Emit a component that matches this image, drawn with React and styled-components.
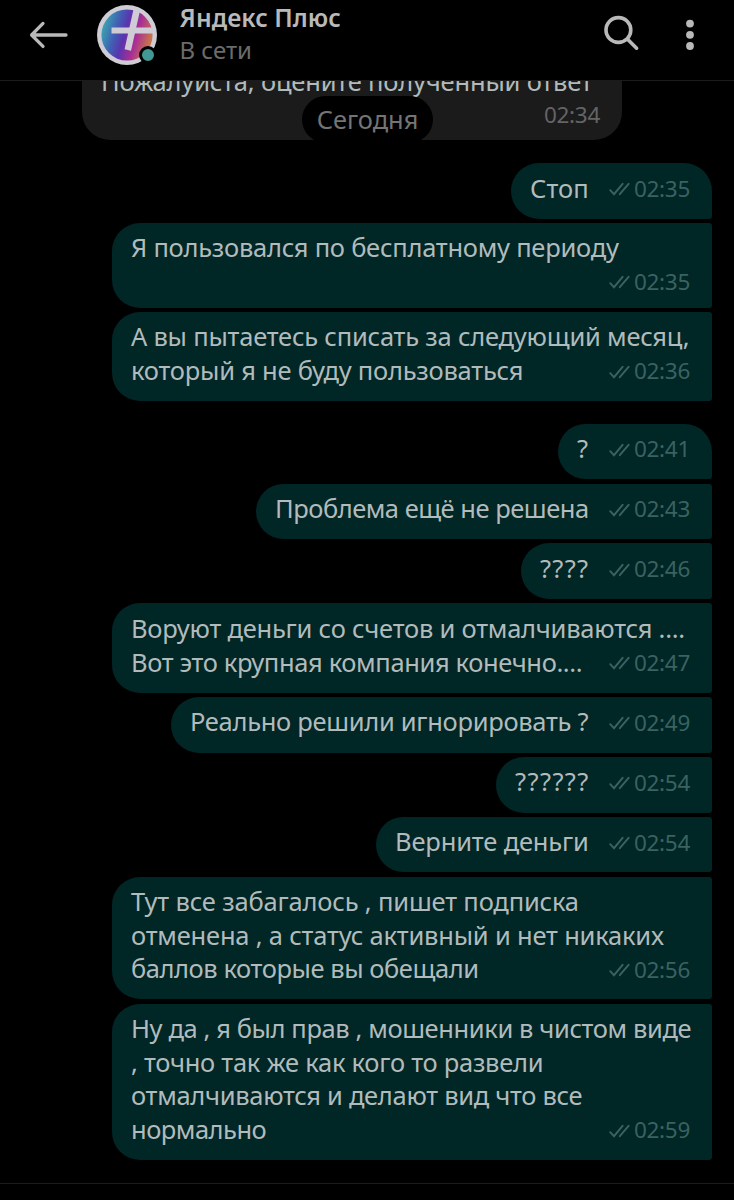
import React from "react";
import styled, { createGlobalStyle } from "styled-components";

// each line is [text, letter-spacing in px]
const messages = [
  { time: "02:35", width: 201, first: true, lines: [["Стоп", 0.1]] },
  {
    time: "02:35",
    width: 600,
    ownRow: true,
    lines: [["Я пользовался по бесплатному периоду", -0.25]],
  },
  {
    time: "02:36",
    width: 600,
    lines: [
      ["А вы пытаетесь списать за следующий месяц,", -0.22],
      ["который я не буду пользоваться", -0.23],
    ],
  },
  { time: "02:41", width: 154, first: true, lines: [["?", 0]] },
  { time: "02:43", width: 456, lines: [["Проблема ещё не решена", -0.48]] },
  { time: "02:46", width: 191, lines: [["????", 1.3]] },
  {
    time: "02:47",
    width: 600,
    lines: [
      ["Воруют деньги со счетов и отмалчиваются ....", -0.23],
      ["Вот это крупная компания конечно....", -0.37],
    ],
  },
  {
    time: "02:49",
    width: 541,
    lines: [["Реально решили игнорировать ?", -0.3]],
  },
  { time: "02:54", width: 216, lines: [["??????", 1.4]] },
  { time: "02:54", width: 336, lines: [["Верните деньги", -0.16]] },
  {
    time: "02:56",
    width: 600,
    lines: [
      ["Тут все забагалось , пишет подписка", -0.17],
      ["отменена , а статус активный и нет никаких", -0.2],
      ["баллов которые вы обещали", -0.43],
    ],
  },
  {
    time: "02:59",
    width: 600,
    lines: [
      ["Ну да , я был прав , мошенники в чистом виде", -0.39],
      [", точно так же как кого то развели", -0.26],
      ["отмалчиваются и делают вид что все", -0.3],
      ["нормально", -0.5],
    ],
  },
];

const Meta = ({ time }) => (
  <StMeta>
    <svg width="21" height="14" viewBox="0 0 21 14">
      <path
        d="M1.2 8.2L5 12.2L13.6 1.8M10.8 12.2L19.6 1.8"
        fill="none"
        stroke="currentColor"
        strokeWidth="1.9"
        strokeLinecap="round"
      />
    </svg>
    <StTime>{time}</StTime>
  </StMeta>
);

const Message = ({ time, width, first, ownRow, lines }) => (
  <StBubble $width={width} $first={first} $ownRow={ownRow}>
    {lines.map(([text, spacing], i) => (
      <StLine key={text}>
        <StText $spacing={spacing}>{text}</StText>
        {!ownRow && i === lines.length - 1 && <Meta time={time} />}
      </StLine>
    ))}
    {ownRow && (
      <StMetaRow>
        <Meta time={time} />
      </StMetaRow>
    )}
  </StBubble>
);

const Header = () => (
  <StHeader>
    <StBack>
      <svg width="40" height="28" viewBox="0 0 40 28">
        <path
          d="M14 2.4L2.6 14L14 25.4M2.6 14H37"
          fill="none"
          stroke="currentColor"
          strokeWidth="3.3"
          strokeLinecap="round"
          strokeLinejoin="round"
        />
      </svg>
    </StBack>
    <StAvatar>
      <svg width="62" height="62" viewBox="0 0 62 62">
        <defs>
          <linearGradient id="plus" x1="0" y1="0.35" x2="1" y2="0.65">
            <stop offset="0.02" stopColor="#3ba3b0" />
            <stop offset="0.26" stopColor="#3f62b4" />
            <stop offset="0.45" stopColor="#5a35ae" />
            <stop offset="0.68" stopColor="#a92e94" />
            <stop offset="0.95" stopColor="#c8754a" />
          </linearGradient>
        </defs>
        <circle cx="31" cy="31" r="30" fill="#cfccd6" />
        <circle cx="31" cy="31" r="25.6" fill="url(#plus)" />
        <g stroke="#cfccd6" fill="none">
          <path d="M15.5 26.6H58" strokeWidth="6" />
          <path d="M41.2 4L31.8 46" strokeWidth="6.6" />
        </g>
      </svg>
      <StOnline />
    </StAvatar>
    <StTitles>
      <StName>Яндекс Плюс</StName>
      <StStatus>В сети</StStatus>
    </StTitles>
    <StActions>
      <svg width="38" height="38" viewBox="0 0 38 38">
        <g
          fill="none"
          stroke="currentColor"
          strokeWidth="3.6"
          strokeLinecap="round"
        >
          <circle cx="14.4" cy="15" r="12.4" />
          <path d="M23.6 24.2L32.6 33.2" />
        </g>
      </svg>
      <svg width="8" height="32" viewBox="0 0 8 32" fill="currentColor">
        <circle cx="4" cy="4.6" r="3.9" />
        <circle cx="4" cy="15.8" r="3.9" />
        <circle cx="4" cy="27" r="3.9" />
      </svg>
    </StActions>
  </StHeader>
);

export default function App() {
  return (
    <StPage>
      <GlobalStyle />
      <Header />
      <StChat>
        <StDate>Сегодня</StDate>
        <StIncoming>
          <StText $spacing={-0.19}>Пожалуйста, оцените полученный ответ</StText>
          <StIncomingTime>02:34</StIncomingTime>
        </StIncoming>
        {messages.map((message, i) => (
          <Message key={i} {...message} />
        ))}
      </StChat>
      <StFooter />
    </StPage>
  );
}

const GlobalStyle = createGlobalStyle`
  body {
    margin: 0;
    background-color: #000;
  }
`;

const StPage = styled.div`
  display: flex;
  flex-direction: column;
  width: 734px;
  height: 1200px;
  overflow: hidden;
  background-color: #000;
  font-family: "Noto Sans", sans-serif;
`;

const StHeader = styled.header`
  display: flex;
  flex: none;
  align-items: flex-start;
  box-sizing: border-box;
  height: 81px;
  border-bottom: 1px solid #1b1b1b;
  color: #b9b9b9;

  svg {
    display: block;
  }
`;

const StBack = styled.div`
  padding: 21px 27px 0 29px;
`;

const StAvatar = styled.div`
  position: relative;
  width: 62px;
  height: 62px;
  margin-top: 4px;
`;

/* the dot sits over the avatar edge */
const StOnline = styled.span`
  position: absolute;
  right: 1px;
  bottom: 2px;
  width: 12px;
  height: 12px;
  border: 3px solid #000;
  border-radius: 50%;
  background-color: #429894;
`;

const StTitles = styled.div`
  display: flex;
  flex: 1;
  flex-direction: column;
  padding: 2px 0 0 21.5px;
  white-space: nowrap;
`;

const StName = styled.span`
  font-size: 24.6px;
  font-weight: 600;
  letter-spacing: 0.05px;
  line-height: 32px;
`;

const StStatus = styled.span`
  color: #6b6b6b;
  font-size: 24px;
  line-height: 31px;
`;

const StActions = styled.div`
  display: flex;
  align-items: flex-start;
  gap: 44px;
  padding: 15px 40px 0 0;

  svg:last-child {
    margin-top: 4px;
  }
`;

const StChat = styled.main`
  position: relative;
  display: flex;
  flex: 1;
  flex-direction: column;
  justify-content: flex-end;
  align-items: flex-end;
  gap: 4.2px;
  padding: 0 22px 23px 82px;
  overflow: hidden;
`;

const StDate = styled.div`
  position: absolute;
  top: 15px;
  left: 302px;
  z-index: 1;
  width: 131px;
  height: 47px;
  border-radius: 24px;
  background-color: #000;
  color: #747474;
  font-size: 25.4px;
  line-height: 46px;
  text-align: center;
`;

const StIncoming = styled.div`
  display: flex;
  flex: none;
  flex-direction: column;
  align-self: flex-start;
  box-sizing: border-box;
  width: 540px;
  height: 84px;
  padding: 8.5px 22px 0 19px;
  border-radius: 4px 28px 28px 28px;
  background-color: #1b1b1b;
`;

const StIncomingTime = styled.span`
  align-self: flex-end;
  color: #646464;
  font-size: 22.5px;
  letter-spacing: -0.3px;
  line-height: 33px;
`;

const StBubble = styled.div`
  flex: none;
  box-sizing: border-box;
  width: ${({ $width }) => $width}px;
  margin-top: ${({ $first }) => ($first ? "18.4px" : "0")};
  padding: 8.6px 22px ${({ $ownRow }) => ($ownRow ? "9.6px" : "13.6px")} 19px;
  border-radius: 28px ${({ $first }) => ($first ? "28px" : "3px")} 3px 28px;
  background-color: #002626;
`;

const StLine = styled.div`
  display: flex;
  justify-content: space-between;
  height: 33.55px;
`;

const StText = styled.span`
  color: #b2bbbb;
  font-size: 25.5px;
  letter-spacing: ${({ $spacing }) => $spacing}px;
  line-height: 33.55px;
  white-space: pre;
`;

const StMetaRow = styled.div`
  display: flex;
  justify-content: flex-end;
  height: 33px;
`;

const StMeta = styled.span`
  display: flex;
  align-items: center;
  gap: 4px;
  color: #3a6261;

  svg {
    margin-top: 2px;
  }
`;

const StTime = styled.span`
  font-size: 22.5px;
  letter-spacing: -0.3px;
  line-height: 31px;
`;

const StFooter = styled.footer`
  flex: none;
  box-sizing: border-box;
  height: 17px;
  border-top: 1px solid #1b1b1b;
`;
